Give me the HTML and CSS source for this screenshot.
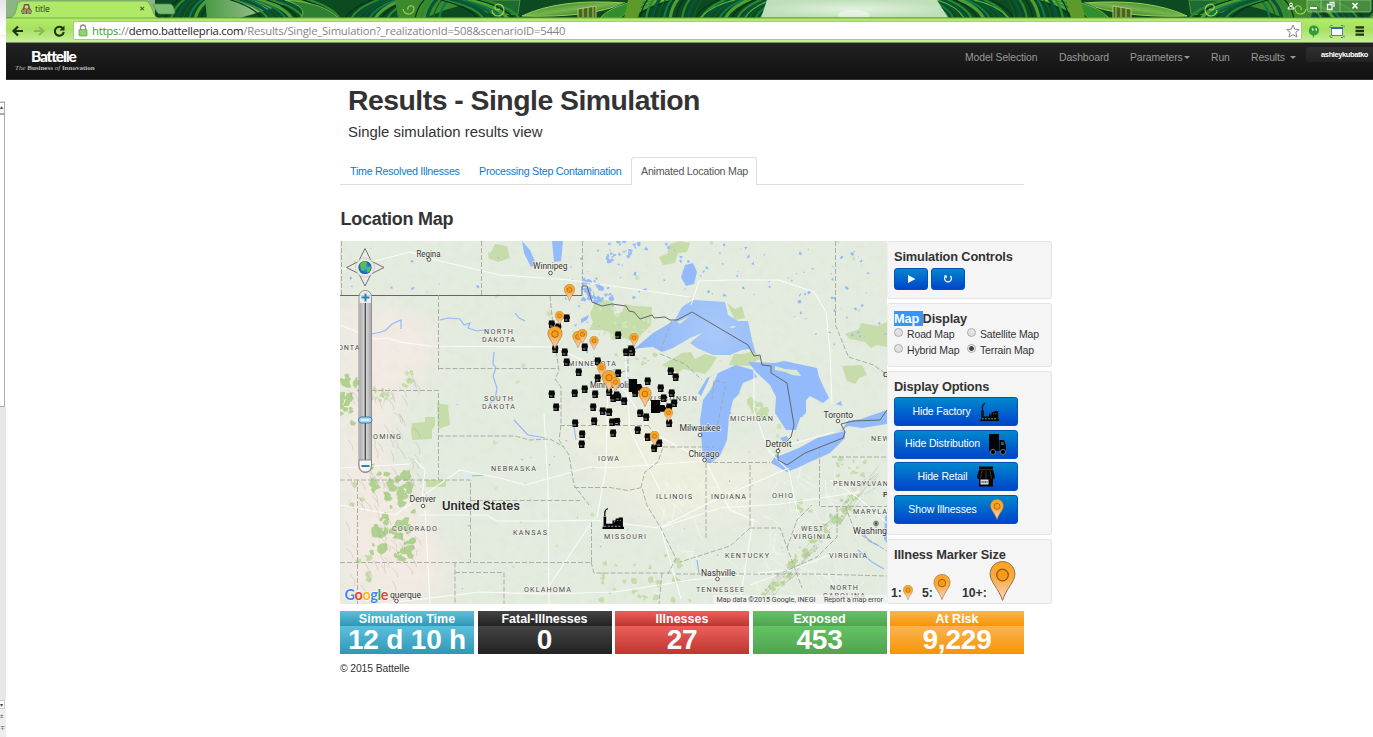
FILE: index.html
```
<!DOCTYPE html>
<html lang="en">
<head>
<meta charset="utf-8">
<title>title</title>
<link rel="stylesheet" href="styles.css">
</head>
<body>
<svg class="defs" width="0" height="0" aria-hidden="true">
  <defs>
    <linearGradient id="pinFill" x1="0" y1="0" x2="0" y2="1"><stop offset="0" stop-color="#fba31c"/><stop offset=".45" stop-color="#f9ac45"/><stop offset="1" stop-color="#f6d9d0"/></linearGradient>
    <symbol id="pin" viewBox="0 0 26 40"><path d="M13 .6C6 .6.6 6 .6 13c0 8 8.400 14 12.400 26.400C17 27 25.400 21 25.400 13 25.400 6 20 .6 13 .6z" fill="url(#pinFill)" stroke="#96703f" stroke-width="1"/><circle cx="13" cy="14" r="5.800" fill="#f79b16" stroke="#8c5a16" stroke-width="1.300"/></symbol>
    <symbol id="shop" viewBox="0 0 18 20"><path d="M2 0h14v3H2zM2 3.500h14l2 7-1 2H1l-1-2zM2 12h14v8H2z" fill="#050505"/><path d="M5 4l-1.500 8M9 4v8M13 4l1.500 8" stroke="#555" stroke-width=".6"/><path d="M3.500 13h8v5h-8z" fill="#ddd"/><path d="M4.500 15.500h6" stroke="#444" stroke-width="1.600" stroke-dasharray="1.200 .5"/></symbol>
    <symbol id="shopSmall" viewBox="0 0 18 20"><path d="M2 0h14v3l2 7-1 2h-1v8H2v-8H1l-1-2 2-7z" fill="#0a0a0a"/><path d="M4 14h7v2.500H4z" fill="#999"/></symbol>
    <symbol id="truck" viewBox="0 0 18 21"><path d="M0 0h10v17H0zM10.500 6H15l2 5.500V17h-6.500z" fill="#050505"/><path d="M12 8h2.500l1 3H12z" fill="#456"/><circle cx="4" cy="18" r="2.600" fill="#050505" stroke="#789" stroke-width=".8"/><circle cx="14" cy="18" r="2.600" fill="#050505" stroke="#789" stroke-width=".8"/></symbol>
    <symbol id="factory" viewBox="0 0 22 20"><path d="M1.500 18V8h2.500v7h6v-3h3v-2h3v-1h4v9h1v2H.5v-2z" fill="#050505"/><path d="M2.700 7.500V4.500Q2.700 2 5.500.5" fill="none" stroke="#050505" stroke-width="1.200"/><path d="M2 17.500h17" stroke="#9aa" stroke-width="1" stroke-dasharray="2 1.400"/><path d="M11.500 13h1M14.500 12h1M17 12h1" stroke="#889" stroke-width="1"/></symbol>
  </defs>
</svg>
<div class="screen">
  <aside class="behind">
    <div class="behind-top"></div>
    <div class="up">▴</div><div class="thumb"></div><div class="track"></div>
    <div class="down">▾</div><div class="jump"><span>±</span><span>∓</span></div>
  </aside>
  <div class="window">
    <header class="tabstrip">
      <svg class="wallpaper" id="wallpaper" viewBox="6 0 1367 18" width="1367" height="18"></svg>
      <svg class="tabshape" viewBox="0 0 180 18" width="180" height="18"><path d="M0 18C7 17 6 4 9 2Q10 1 13 1H135Q138 1 139 3C144 11 143 16 148 18z" fill="#afe968" stroke="#6a9d40" stroke-width=".7"/><path d="M143 5Q143 4 145 4h15q2 0 3 2l2 6q0 2-2 2h-13q-2 0-3-2z" fill="#7bbb6f" stroke="#508a4c" stroke-width=".7"/></svg>
      <div class="tabtext">
        <svg width="11" height="12" viewBox="0 0 11 12"><path d="M3 1h5l1 4 2 3-1 3H1L0 8l2-3z" fill="#6f6442"/><circle cx="5.500" cy="4" r="1.800" fill="#e6c69a"/><path d="M4 6v5M7 6v5M2 7v3M9 7v3" stroke="#e5ddb0" stroke-width=".7"/></svg>
        <span class="tabtitle">title</span><span class="tabclose">✕</span>
      </div>
      <svg class="winbtns" viewBox="1283 0 90 13" width="90" height="13"><path d="M1307 0v9q0 3 3 3h59q2 0 2-2V0z" fill="#5ba34a" fill-opacity=".75" stroke="#b5d8a0" stroke-width=".6"/><path d="M1321 0v12M1340 0v12" stroke="#a7cc92" stroke-width=".7"/><path d="M1310 8h7" stroke="#fff" stroke-width="2"/><path d="M1329.500 2.500h4.500v4.500M1327.500 4.500h4.500v5h-4.500z" fill="none" stroke="#fff" stroke-width="1.300"/><path d="M1352.500 3l5 5.500m0-5.500l-5 5.500" stroke="#fff" stroke-width="1.600"/><circle cx="1291" cy="4.500" r="1.500" fill="none" stroke="#fff"/><path d="M1288 9q0-2.500 3-2.500t3 2.500z" fill="none" stroke="#fff"/></svg>
    </header>
    <div class="toolbar">
      <svg class="navicons" viewBox="0 0 66 24" width="66" height="24"><path d="M17 12H8M12 7.500L7.500 12l4.500 4.500" fill="none" stroke="#20330f" stroke-width="2.200"/><path d="M28 12h9M33 8l4.500 4-4.500 4" fill="none" stroke="#8cba58" stroke-width="2"/><path d="M57 9.500A4.500 4.500 0 1 0 57.800 13" fill="none" stroke="#20330f" stroke-width="2"/><path d="M58.500 6.500v5h-5z" fill="#20330f"/></svg>
      <div class="omnibox">
        <svg width="10" height="13" viewBox="0 0 10 13"><path d="M2.500 6V3.500a2.500 2.500 0 0 1 5 0V6" fill="none" stroke="#8e8e8e" stroke-width="1.300"/><rect x="1" y="5.500" width="8" height="6.500" rx=".8" fill="#8fd36b" stroke="#5a9a3e" stroke-width=".7"/></svg>
        <div class="url"><span class="secure">https</span>://<b>demo.battellepria.com</b>/Results/Single_Simulation?_realizationId=508&amp;scenarioID=5440</div>
        <svg class="star" width="14" height="14" viewBox="0 0 14 14"><path d="M7 1l1.800 4.200 4.400.3-3.400 2.900L11 13 7 10.600 3 13l1.200-4.600L.8 5.500l4.400-.3z" fill="#fff" stroke="#777" stroke-width=".9"/></svg>
      </div>
      <svg class="ext" width="62" height="24" viewBox="0 0 62 24"><path d="M12 6.500a5 5 0 0 1 0 10l-.5 2.500Q10.500 17.500 10.500 16.300A5 5 0 0 1 12 6.500z" fill="#2f9b3c"/><path d="M9.500 9.500h2v2.200h-1M13 9.500h2v2.200h-1" fill="#e8fbe0"/><rect x="29.500" y="8.500" width="11" height="8" fill="#f5f8ff" stroke="#5a82ad"/><path d="M29 9h12" stroke="#3569a8" stroke-width="2"/><path d="M28 9V6.500h3M39 6.500h3V9M28 16v2.500h3M39 18.500h3V16" stroke="#5776b5" fill="none" stroke-dasharray="2 1"/><path d="M53.500 8.300h9M53.500 12h9M53.500 15.700h9" stroke="#20330f" stroke-width="2.300"/></svg>
    </div>
    <nav class="navbar">
      <div class="brand"><div class="brand-name">Battelle</div><div class="brand-tag"><i>The</i> <b>Business</b> <i>of</i> <b>Innovation</b></div></div>
      <div class="links"><a class="l1">Model Selection</a><a class="l2">Dashboard</a><a class="l3">Parameters<i class="caret"></i></a><a class="l4">Run</a><a class="l5">Results <i class="caret wide"></i></a></div>
      <div class="user">ashleykubatko</div>
    </nav>
    <main class="container">
      <h1><span>Results - Single Simulation</span></h1>
      <p class="lead">Single simulation results view</p>
      <ul class="tabs"><li class="t1">Time Resolved Illnesses</li><li class="t2">Processing Step Contamination</li><li class="active">Animated Location Map</li></ul>
      <h2>Location Map</h2>
      <div class="row">
        <svg class="map" id="map" viewBox="340 241 547 363" width="547" height="363"></svg>
        <div class="side">
          <section class="panel p1"><h3>Simulation Controls</h3><div class="pair"><button><svg width="9" height="8" viewBox="0 0 9 8"><path d="M1 0l7.500 4L1 8z" fill="#fff"/></svg></button><button><svg width="10" height="10" viewBox="0 0 10 10"><path d="M2.600 2A3.400 3.400 0 1 0 7.400 2" fill="none" stroke="#fff" stroke-width="1.200"/><path d="M.8 1.400h3v3z" fill="#fff"/></svg></button></div></section>
          <section class="panel p2"><h3><mark>Map </mark>Display</h3><div class="radios"><label><i class="radio"></i>Road Map</label><label><i class="radio"></i>Satellite Map</label><label><i class="radio"></i>Hybrid Map</label><label><i class="radio on"></i>Terrain Map</label></div></section>
          <section class="panel p3"><h3>Display Options</h3>
            <button class="opt">Hide Factory<svg class="f" width="20" height="20"><use href="#factory"/></svg></button>
            <button class="opt">Hide Distribution<svg width="18" height="21"><use href="#truck"/></svg></button>
            <button class="opt">Hide Retail<svg width="18" height="21"><use href="#shop"/></svg></button>
            <button class="opt ill">Show Illnesses<svg width="14" height="21"><use href="#pin"/></svg></button>
          </section>
          <section class="panel p4"><h3>Illness Marker Size</h3><div class="sizes"><span>1:</span><svg class="s1" width="10" height="15"><use href="#pin"/></svg><span>5:</span><svg class="s2" width="18" height="26"><use href="#pin"/></svg><span>10+:</span><svg class="s3" width="27" height="40"><use href="#pin"/></svg></div></section>
        </div>
      </div>
      <div class="stats">
        <div class="stat blue"><h4>Simulation Time</h4><strong>12 d 10 h</strong></div>
        <div class="stat black"><h4>Fatal-Illnesses</h4><strong>0</strong></div>
        <div class="stat red"><h4>Illnesses</h4><strong>27</strong></div>
        <div class="stat green"><h4>Exposed</h4><strong>453</strong></div>
        <div class="stat orange"><h4>At Risk</h4><strong>9,229</strong></div>
      </div>
      <footer>© 2015 Battelle</footer>
    </main>
  </div>
</div>
<script src="map.js"></script>
</body>
</html>
```
FILE: styles.css
```
*{box-sizing:border-box}
body{margin:0;background:#fff;font-family:"Liberation Sans",Arial,sans-serif;font-size:10.7px;color:#333;overflow:hidden}
h1,h2,h3,h4,p,ul{margin:0;padding:0}
.defs{display:block;height:0}
.screen{display:flex;width:1373px;height:737px;overflow:hidden}
.behind{width:6px;flex:none;display:flex;flex-direction:column;font-size:6px;line-height:9px;color:#444;overflow:hidden}
.behind-top{height:102px;border-bottom:1px solid #ddd;background:linear-gradient(#e5e5e5,#fff 30px,#fff 34px,#f2f2f2 35px,#fff 40px)}
.up{height:12px;border:1px solid #aaa;border-left:0;width:5px}
.thumb{height:293px;width:5px;border:1px solid #aaa;border-left:0;background:#fff}
.track{height:293px;background:#e7e7e7}
.down{height:9px;border:1px solid #ccc;border-left:0;width:5px;background:#fff}
.jump{flex:1;background:#eee;display:flex;flex-direction:column;gap:3px;padding-top:3px}
.window{flex:1;min-width:0}
.tabstrip{display:grid;height:18px;overflow:hidden}
.tabstrip>*{grid-area:1/1}
.wallpaper,.tabshape{display:block}
.tabshape{margin-left:4px}
.tabtext{display:flex;align-items:center;height:18px;width:134px;margin-left:15px;font:8.600px "Open Sans","Noto Sans",sans-serif;color:#243315}
.tabtitle{margin-left:3px;flex:1;letter-spacing:-.1px}
.tabclose{font:7px "DejaVu Sans",sans-serif;margin-right:10px}
.winbtns{justify-self:end}
.toolbar{height:25px;display:flex;align-items:center;background:linear-gradient(#b0ec66,#a7e162 45%,#c8ef9c);border-top:1px solid #94cc5c;border-bottom:1px solid #799162}
.omnibox{width:1229px;margin-left:1px;height:19px;background:#fff;border:1px solid #a8ca82;border-radius:2px;display:flex;align-items:center;padding:0 1px 0 4px}
.url{font:11.300px/17px "Open Sans","Noto Sans",sans-serif;letter-spacing:-.23px;color:#858585;margin-left:4px;white-space:nowrap}
.url b{font-weight:400;color:#222}
.secure{color:#31a038}
.star{margin-left:auto}
.navbar{height:37px;background:linear-gradient(#222,#111);border-bottom:1px solid #333;display:flex;overflow:hidden}
.brand{width:120px;padding:5px 0 0 9px;color:#fff}
.brand-name{font:900 15.500px/17px Lato,sans-serif;letter-spacing:-1.200px;margin-left:16px}
.brand-tag{font:7px/7px "Liberation Serif",serif;color:#bbb;white-space:nowrap}
.links{display:grid;grid-template-columns:94px 71px 81px 40px 55px;margin-left:839px;line-height:30px;font-size:10.400px;letter-spacing:-.1px;color:#999;white-space:nowrap}
.caret{display:inline-block;border:3px solid transparent;border-top-color:#999;border-bottom:0;vertical-align:2px;margin-left:1px}
.wide{margin-left:2px}
.user{flex:1;margin-top:4px;height:15px;background:linear-gradient(#303030,#222);border-radius:3px 0 0 3px;color:#fff;font:bold 7.500px/16px "Liberation Sans",Arial,sans-serif;text-align:right;padding-right:5px;letter-spacing:-.4px}
.container{width:684px;margin-left:334px}
h1{font-size:28.400px;line-height:32px;padding:4px 0 0 8px;height:43px;white-space:nowrap;letter-spacing:-.52px}
.lead{font-size:14.900px;line-height:19px;padding-left:8px;height:34px}
.tabs{list-style:none;display:flex;height:28px;border-bottom:1px solid #ddd;line-height:28px;color:#0d79cb;white-space:nowrap;letter-spacing:-.25px}
.t1{width:130px;padding-left:10px}.t2{width:161px;padding-left:9px}
.active{height:28px;padding:0 9px;border:1px solid #ddd;border-bottom:0;border-radius:3px 3px 0 0;background:#fff;color:#555;line-height:27px;width:126px}
h2{font-size:18px;line-height:25px;padding-top:22px;height:56px;letter-spacing:-.28px;padding-left:.5px}
.row{display:flex;width:712px;height:363px}
.map{flex:none;display:block}
.side{width:165px;display:flex;flex-direction:column}
.panel{background:#f5f5f5;border:1px solid #e3e3e3;border-left-color:#eee;border-radius:3px;padding:6px 6px 0;white-space:nowrap}
.p1{height:58px;margin-bottom:4px}.p2{height:64px;margin-bottom:4px}.p3{height:164px;margin-bottom:4px}.p4{height:65px}
h3{font-size:12.800px;line-height:17px;height:16px;letter-spacing:-.15px}
.pair{display:flex;gap:3px;margin-top:4px}
button{border:1px solid #0451b8;border-radius:3px;background:linear-gradient(#08c,#04c);color:#fff;font:10.500px "Liberation Sans",Arial,sans-serif;letter-spacing:-.12px;padding:0}
.pair button{width:34px;height:22px;display:flex;align-items:center;justify-content:center}
mark{background:#3297fd;color:#fff;white-space:pre}
.radios{display:grid;grid-template-columns:73px auto;line-height:16px;font-size:10.500px;letter-spacing:-.13px}
.radios label{display:flex;align-items:center}
.radio{width:9px;height:9px;border-radius:50%;border:1px solid #aaa;background:linear-gradient(#e8e8e8,#ddd);margin-right:4px;margin-top:-3px}
.on{background:radial-gradient(#444 0 2px,#eee 2.800px)}
.opt{width:124px;height:29px;display:flex;align-items:center;justify-content:center;gap:9px;margin-bottom:3.700px;padding-bottom:2px}
.opt svg{position:relative;top:1px}
.p3 h3{margin-bottom:3px}
.ill{gap:13px}
.sizes{display:flex;align-items:flex-end;height:40px;margin:-1px 0 0 -3px;font-size:12.300px;font-weight:700;line-height:15px}
.sizes svg{flex:none}
.s1{margin:0 9px 1px 1px}.s2{margin:0 11px 1px 0}.s3{margin-left:2px}
.stats{display:flex;gap:3.500px;margin-top:7px}
.stat{width:134px;height:43px;color:#fff;text-align:center;white-space:nowrap}
.stat h4{height:15px;font-size:12.500px;line-height:16px;background:linear-gradient(var(--a),var(--b))}
.stat strong{display:block;height:28px;font-size:28px;line-height:28px;letter-spacing:-.2px;background:linear-gradient(var(--a),var(--b))}
.blue{--a:#5bc0de;--b:#2f96b4}.black{--a:#444;--b:#222}.red{--a:#ee5f5b;--b:#bd362f}.green{--a:#62c462;--b:#51a351}.orange{--a:#fbb450;--b:#f89406}
footer{margin-top:8px;line-height:13px;font-size:10.400px;letter-spacing:-.12px}
```
FILE: map.js
```
(function () {
  let seed = 7;
  const rnd = () => (seed = (seed * 16807) % 2147483647) / 2147483647;
  const P = (d, a) => `<path d="${d}" ${a}/>`;

  /* deterministic blotches: area, count, colour, size range */
  function specks(x, y, w, h, n, fill, s0, s1, extra) {
    let d = '';
    for (let i = 0; i < n; i++) {
      const cx = x + rnd() * w, cy = y + rnd() * h, r = s0 + rnd() * (s1 - s0), k = 7;
      for (let j = 0; j < k; j++) {
        const a = j / k * 6.283, q = r * (.35 + rnd() * .9);
        d += (j ? 'L' : 'M') + (cx + Math.cos(a) * q).toFixed(1) + ' ' + (cy + Math.sin(a) * q).toFixed(1);
      }
      d += 'z';
    }
    return P(d, `fill="${fill}" ${extra || ''}`);
  }

  let m = `<defs>
    <filter id="soft" x="-30%" y="-30%" width="160%" height="160%"><feGaussianBlur stdDeviation="12"/></filter>
    <filter id="relief" x="0" y="0" width="1" height="1"><feTurbulence type="fractalNoise" baseFrequency=".11" numOctaves="4" seed="3"/><feColorMatrix values="0 0 0 0 .45  0 0 0 0 .48  0 0 0 0 .4  0 .9 0 0 -.38"/></filter>
    <radialGradient id="globe"><stop offset="0" stop-color="#4fb4f4"/><stop offset="1" stop-color="#1257a8"/></radialGradient>
    <linearGradient id="rail"><stop offset="0" stop-color="#aaa"/><stop offset=".5" stop-color="#ddd"/><stop offset="1" stop-color="#aaa"/></linearGradient>
    <radialGradient id="lake" gradientUnits="userSpaceOnUse" cx="715" cy="330" r="75"><stop offset="0" stop-color="#a9c9fb"/><stop offset="1" stop-color="#8fb7f8"/></radialGradient>
  </defs>
  <rect x="340" y="241" width="547" height="363" fill="#e4ebdf"/>`;
  m += P('M340 300L400 310 440 330 430 370 390 400 400 430 380 450 430 520 450 570 430 604H340z', 'fill="#f3ebe3" filter="url(#soft)"');
  m += P('M560 420L640 405 700 450 780 460 750 520 650 520 600 480z', 'fill="#edefdf" filter="url(#soft)"');
  m += '<rect x="340" y="241" width="547" height="363" filter="url(#relief)" opacity=".15"/>';
  const g = '#c6dcaa';
  m += specks(372, 466, 42, 94, 66, '#b1d191', 2, 6);
  m += specks(340, 376, 17, 50, 18, '#b1d191', 2, 6);
  m += specks(368, 385, 22, 25, 9, g, 2, 5) + specks(398, 368, 15, 18, 5, g, 2, 4);
  m += specks(350, 480, 20, 110, 10, g, 2, 4);
  m += P('M595 302L604 300 613 302 614 315 622 312 625 304 634 306 652 307 651 325 643 333 634 342 624 338 612 340 609 332 602 330 589 330 593 322 590 314zM495 244l12 2 3 12-12 4-10-4zM412 423l13-1 0-5 10 0 0 9 -3 3 0 10-20 1-1-10zM437 403l11 2 2 20-12 4zM426 480h20v7h-20zM662 365l20-12 9-1 4 7 10-5 12 3-6 10-6 7-22-5-5 4zM729 365l5-11 10 0 8-3 10 7-6 3-2 5zM845 334l14-5 2-6 17 3 9-4v25l-10-2-6 3-6-6-15-3zM842 366l20-1 5 10-8 3-4 6-8-3-2-6zM670 244l10-3 10 2-3 9-9 1-3 10-12 2-4-8 8-3zM727 303l8 6 7-3 3 12-10 2z', `fill="${g}"`);
  m += specks(600, 555, 90, 46, 26, g, 1.500, 4.500) + specks(610, 345, 55, 22, 9, g, 1.500, 4.500) + specks(595, 300, 60, 42, 22, '#d5e4c0', 1, 3);
  m += specks(750, 400, 18, 22, 8, g, 2, 5) + specks(790, 500, 25, 12, 5, g, 2, 4);
  for (let i = 0; i < 36; i++) m += specks(763 + i * 2.400, 590 - i * 2.800, 13, 9, 2, '#bbd89d', 1, 4);
  m += specks(835, 457, 45, 25, 11, g, 1.500, 4) + specks(340, 241, 540, 340, 40, g, 1, 3, 'opacity=".7"');

  /* relief ridges */
  let ridge = '';
  for (let i = 0; i < 95; i++) { const x = 345 + rnd() * 75, y = 372 + rnd() * 220; ridge += `M${x} ${y}l${3 + rnd() * 3} ${4 + rnd() * 4}l${rnd() * 3 - 1} 5`; }
  for (let i = 0; i < 70; i++) { const t = rnd(), x = 755 + t * 118, y = 600 - t * 133 + rnd() * 20; ridge += `M${x} ${y}l${6 + rnd() * 6} ${-7 - rnd() * 5}`; }
  m += P(ridge, 'fill="none" stroke="#9ba493" stroke-width=".8" opacity=".38"');

  /* water */
  const w = '#93bafa';
  m += specks(560, 244, 210, 55, 60, w, .4, 2.200) + specks(605, 241, 34, 24, 20, w, .6, 2.800);
  m += specks(790, 245, 97, 100, 46, w, .4, 2.200) + specks(582, 278, 30, 24, 34, w, 1, 3.500);
  m += specks(570, 300, 60, 95, 28, w, .4, 1.500) + specks(345, 245, 190, 50, 14, w, .5, 2) + specks(450, 400, 430, 190, 55, w, .3, 1.200);
  m += P('M522 241L530 250 536 264 531 267 524 253zM552 241h11l-2 20-7 1zM685 265l8-2 4 9-3 12-8 2-5-9zM581 319l8-4-2 5-6 3z', `fill="${w}"`);
  m += P('M633 350L653 333 675 320 682 307 693 300 710 301 725 302 728 315 738 321 748 321 752 340 756 355 750 349 742 350 730 355 713 355 697 348 690 343 702 333 690 338 673 348 662 352 653 347 640 348z', 'fill="url(#lake)"');
  m += P('M736 365L753 370 757 377 743 383 738 395 733 400 729 417 727 440 720 456 711 463 703 461 702 447 701 433 700 420 703 400 711 389 718 373 710 377 701 396 698 393 707 378 727 369z', `fill="${w}"`);
  m += P('M748 362L775 363 784 361 817 368 819 377 824 388 829 398 823 403 810 396 806 400 806 413 800 418 796 430H786L775 413 776 397 770 385 756 372z', `fill="${w}"`);
  m += P('M771 463L776 454 779 456 799 448 817 438 845 431 845 438 830 453 812 461 797 468 787 472zM840 432L848 421 861 419 887 410V424L862 428 848 426zM780 438l7-2 2 5-6 1zM836 404l5-3 1 5zM885 517l2-3v29l-3-4z', `fill="${w}"`);
  m += P('M775 366l10 3 12 1 4 6-9-1-7-3-10-2zM677 322l13-6-10 8zM731 326h5l-2 2h-4z', 'fill="#dce8cd"');
  m += P('M440 320l8-2 12 1 4 6 6-2-2 5 9 3 13-2M494 352l-1 12 3 4-3 8 4 12-2 12-6 4M372 334l9-2 5-2 6-6 9-4 0 9M514 420l14 15 18 3M484 475l-12 1M515 313l4 5 6 3M858 550l14 12 12 7M861 530l8 11 10 5M697 560l2 14M573 420l3 20', `fill="none" stroke="${w}" stroke-width="1.200"`);

  /* roads */
  m += P('M340 325L375 339 388 338 400 342 430 346 555 347 620 378M340 270L410 252 440 261 500 275 570 280 690 297M380 604L480 592 545 594 615 592 690 580 790 570M340 505L395 515 460 470 500 478 525 485 590 467 605 468 705 461M420 515h67l10 6 60 0 35-1M549 604l-1-120-4-70M593 520l66 8 60-30 70-30M597 518l9-50 2-90M660 528l60-20 60-4 80-12M705 460l25 50 24 10M616 378l37 55 52 28M753 520l-13 80M661 529l20 70M691 305l8-24 32-1 48 0 35 12 12 20 4 40 2 52M754 371l0 40 15 40 20 20 10 50M781 447l53-15M593 520l-50 75M421 510l4-40-10-10M425 510l5 94M830 480l25 15 32 28M625 350l5 80 30 60M830 555l-80 30M340 468l70-4', 'fill="none" stroke="#fff" stroke-width="1.100" opacity=".8" stroke-linejoin="round"');
  m += P(Array.from({length: 70}, () => { const x = 650 + rnd() * 225, y = 465 + rnd() * 130; return `M${x} ${y}l${rnd() * 24 - 12} ${rnd() * 22}l${rnd() * 18} ${rnd() * 12}`; }).join(''), 'fill="none" stroke="#fff" stroke-width=".7" opacity=".55"');

  /* borders */
  m += P('M340 295.500H582V286H587L592 302 602 306 612 304 626 306 629 311 634 312 640 319 652 315 654 318 665 317 670 320 677 320 692 312 748 345 754 356 760 355 762 365 771 366 771 373 787 383 794 425 791 437 778 449 778 460 787 465 805 453 843 438 845 432 841 424 853 421 880 420 887 410', 'fill="none" stroke="#666" stroke-width="1" stroke-linejoin="round"');
  m += P('M438.500 295V370M341.500 241V295M481.500 241V295M582.500 241V286M357 390.500H438.500V480M438.500 368.500H558.500M438.500 436H515l15 4 20-1 14 8M340 480H470.500V562M340 562.500H591.500V520M470.500 500.500H580M455 562.500V604M455 572.500H504V604M357.500 480V604M550 296l4 40 5 35-4 8 6 8V425l-2 15 10 15 5 30 15 20M560 425.500H648M574 487.500H610l18 3 14 -3 5 18 13 21 16 32-8 15M591 562l3 11H672M676 574H815l72 2M660 354l25 10 17 16M663 447H714M706 463v75M706 462.500H770M750 465V528l-20 18-50 16M750 528l30 0 22 60M835.500 241V325l13 32 25 8 14 10M819.500 452V506.500H887M832 457H887M672 320l-12 32M628 345l0 25-18 6M648 425l15 22-5 15-13 10-4 15M787 548l10-28 15-15M837 507l0 30-20 20-40 18M662 573l-3 31M845 506l10 25 32 20M712 400l2-20 12 3-10 50', 'fill="none" stroke="#a5a8a0" stroke-width=".9" stroke-dasharray="5 2"');

  /* labels: text, left x, baseline, width */
  const states = [['NORTH',484,333.500,29],['DAKOTA',482,341.800,33],['SOUTH',484,401.300,29],['DAKOTA',482,409,33],['MINNESOTA',568,365.800,48],['WISCONSIN',646,401,51],['MICHIGAN',730,420.500,43],['IOWA',598,460.500,21],['NEBRASKA',491,471,45],['WYOMING',360,438.500,41],['COLORADO',392,531,45],['KANSAS',513,535,34],['ILLINOIS',656,499,36],['INDIANA',711,499,35],['OHIO',772,497.500,21],['WEST',801,531,22],['VIRGINIA',793,538.500,38],['KENTUCKY',725,557.500,44],['VIRGINIA',829,557.500,38],['TENNESSEE',696,591.500,48],['OKLAHOMA',524,591.500,47],['MISSOURI',604,539,42],['NORTH',830,590,28],['CAROLINA',823,598,42],['NEW',871,440.500,18],['PENNSYLVAN',833,485.500,55],['MARYLA',853,514,34],['ONTANA',338,349.500,33]];
  const cities = [['Regina',416.500,256.500,24],['Winnipeg',533,269,34.500],['Milwaukee',679.500,430.500,41],['Chicago',688.500,456.500,31],['Detroit',765.500,446.500,26],['Toronto',823.500,417.500,29.500],['Denver',409.500,502,26.500],['Nashville',701,575.500,34.500],['Washing',853,534,34],['Minneapolis',590,387.500,42],['querque',390,598,31]];
  const label = (a, size, fill, adjust, weight) => `<text x="${a[1]}" y="${a[2]}" textLength="${a[3]}" font-size="${size}" font-weight="${weight}" fill="${fill}" font-family="Roboto,sans-serif" stroke="#f4f5ee" stroke-width="1.500" stroke-opacity=".75" paint-order="stroke" lengthAdjust="${adjust}">${a[0]}</text>`;
  states.forEach(a => m += label(a, 7.200, '#4c4c4c', 'spacing', 400));
  cities.forEach(a => m += label(a, 8.700, '#333', 'spacingAndGlyphs', 400));
  m += label(['United States',442,509.700,78], 12.900, '#222', 'spacingAndGlyphs', 500);
  m += '<text x="883" y="497" font-size="8" font-family="Roboto,sans-serif">P</text><text x="883" y="377" font-size="8" font-family="Roboto,sans-serif">O</text>';
  [[429,259.500],[550.500,273],[700,435],[704.500,460],[778,451],[838,421],[423,506],[717.500,579],[396.500,601]].forEach(c => m += `<circle cx="${c[0]}" cy="${c[1]}" r="1.800" fill="#fff" stroke="#444" stroke-width=".9"/>`);
  m += '<circle cx="876" cy="523.500" r="2.300" fill="#fff" stroke="#333" stroke-width=".8"/><circle cx="876" cy="523.500" r="1.300" fill="#333"/>';

  /* markers */
  const shops = [551.5,324,566.5,318,558,327,555,349,564.5,352,566.5,362,584.5,347,597.5,361,578.5,372,597.5,378,551.5,394,556,407,574.5,393,584.5,389,595,394,593,407,602.5,411,609,412,575,423,594,421,612,422,618,335,626,352,632,352,631,349,618,373,647.5,381,670.5,371,675.5,377,660.5,388,635,393,616.5,395,609,392,613,398,618,397,624,401,663.5,398,671.5,393,674,403,669,407,640,413,646,417,669,423,617,421.5,582,434,581.5,444,613,433,637.5,430,647.5,437,659,443,654,448];
  for (let i = 0; i < shops.length; i += 2) m += `<use href="#shopSmall" x="${shops[i] - 3.3}" y="${shops[i + 1] - 3.8}" width="7" height="7.700"/>`;
  m += '<svg x="628.500" y="379" width="14" height="13" viewBox="0 0 18 21" preserveAspectRatio="none"><path d="M0 0h11v21H0zM11 8h5l2 5v6h-7z" fill="#050505"/></svg><svg x="651" y="400" width="15" height="13" viewBox="0 0 18 21" preserveAspectRatio="none"><path d="M0 0h11v21H0zM11 8h5l2 5v6h-7z" fill="#050505"/></svg><use href="#factory" x="602" y="508" width="23" height="21"/>';
  [[569.5,301,17],[559.5,325,14],[555,349,23],[578,348,17],[582.5,344,15],[594,350,14],[601.5,377,14],[609,392,22],[615.5,392,15],[634,347,14],[645,407,20],[668.5,422,14],[654.5,446,15]].forEach(p => m += `<use href="#pin" x="${p[0] - p[2] * .35}" y="${p[1] - p[2]}" width="${p[2] * .7}" height="${p[2]}"/>`);

  /* map controls */
  m += P('M365 248.500l6 12h-12zM365 286l6-12h-12zM346.500 267.500l12-6v12zM384 267.500l-12-6v12z', 'fill="#e9e9e6" stroke="#666" stroke-width=".9"');
  m += '<circle cx="365" cy="267.500" r="9.500" fill="#e9e9e6" stroke="#bbb" stroke-width=".6"/><circle cx="365" cy="267.500" r="6.600" fill="url(#globe)"/>';
  m += P('M360 264q3-4 7-2l-1 4-3 1 1 4-3-1zM367 268l4-2-1 5-3 2z', 'fill="#58c63a"');
  m += '<rect x="359" y="290.500" width="12.500" height="182" rx="6" fill="#eee" fill-opacity=".8" stroke="#888" stroke-width=".9"/><rect x="359.500" y="303" width="11.500" height="157" fill="url(#rail)"/><path d="M365.300 303V460" stroke="#444" stroke-width="1.300"/><path d="M359 460h12.500v5q0 7-6.200 7t-6.300-7z" fill="#f4f4f4" stroke="#777" stroke-width=".8"/><path d="M361.500 297.500h8M365.500 293.500v8M361.500 466h8" stroke="#2d82b5" stroke-width="2"/><rect x="358.500" y="417" width="13.500" height="6" rx="3" fill="#a8d8f5" stroke="#367ca8" stroke-width="1"/><path d="M361 420h8" stroke="#e8f8ff" stroke-width="1.300"/>';
  m += '<rect x="714" y="595" width="173" height="9" fill="#f5f5f5" opacity=".7"/>';
  m += '<g font-family="Roboto,sans-serif" font-size="7.200" fill="#444"><text x="716.500" y="601.500" textLength="99">Map data ©2015 Google, INEGI</text><text x="824" y="601.500" textLength="59">Report a map error</text></g>';
  m += '<text x="344.500" y="599.500" font-family="Lato,sans-serif" font-size="14.500" font-weight="700" textLength="44" stroke="#fff" stroke-width="1" paint-order="stroke"><tspan fill="#4285f4">G</tspan><tspan fill="#ea4335">o</tspan><tspan fill="#fbbc05">o</tspan><tspan fill="#4285f4">g</tspan><tspan fill="#34a853">l</tspan><tspan fill="#ea4335">e</tspan></text>';
  document.getElementById('map').innerHTML = m;

  /* leafy browser theme strip */
  let s = '<defs><linearGradient id="leaf" x1="0" y1="0" x2="1" y2="1"><stop offset="0" stop-color="#1b6b25"/><stop offset=".5" stop-color="#74b549"/><stop offset="1" stop-color="#0d471f"/></linearGradient><linearGradient id="shade"><stop offset="0" stop-color="#4a9a45"/><stop offset=".5" stop-color="#8cba80"/><stop offset="1" stop-color="#1c6a2b"/></linearGradient><radialGradient id="moon"><stop offset="0" stop-color="#e2f2dd"/><stop offset="1" stop-color="#bfdfba"/></radialGradient></defs><rect x="6" width="1367" height="18" fill="#0c4a22"/>';
  const blades = (x0, x1, bend) => {
    const c = ['#04351a', '#2c8a2e', '#07563c', '#145f23', '#0a7a50', '#4f9e31'];
    let o = '';
    for (let x = x0, i = 0; x < x1; x += 6, i++) o += `<path d="M${x} 19Q${x + bend * .2} 7 ${x + bend} -1" fill="none" stroke="${c[i % 6]}" stroke-width="${1.2 + i % 3}"/>`;
    return o;
  };
  const half =
    blades(165, 240, 14) +
    P('M205 0H300L240 18H207z', 'fill="url(#shade)"') + blades(262, 345, -34) +
    P('M285 0Q325 3 338 18L300 18Q310 8 285 0z', 'fill="#2f7f33" stroke="#86c544" stroke-width=".8"') +
    blades(345, 400, 30) + P('M395 0H480L445 10 425 18H398z', 'fill="#3d8a2e"') + blades(415, 445, 10) +
    P('M455 0H520L518 14Q490 18 455 0z', 'fill="#1e6a35" stroke="#4f9e31"') + blades(478, 525, -40) +
    P('M522 16Q560 -2 625 3Q590 18 522 16z', 'fill="url(#leaf)" stroke="#9bd052"') +
    P('M578 18V9l18-3v12zM583 8v10M588 7v11M593 7v11', 'fill="#3e6a22" stroke="#c4c06a" stroke-width="1"') +
    blades(600, 640, 40) + P('M620 18Q632 4 665 0H640Q610 6 600 18z', 'fill="#2f8e2e" stroke="#86c544" stroke-width=".8"') +
    blades(640, 695, 8) + P('M628 0h15l-5 18h-14z', 'fill="#5d9a2a"') + blades(695, 775, 26) +
    P('M700 18Q712 5 735 0M745 18Q752 6 772 0', 'fill="none" stroke="#58b03c" stroke-width="1.200"') +
    P('M403 9a5.500 5.500 0 1 0 11-1q-1-3-4-2t-2 4M492 10a6 6 0 1 0 6-6q-4 1-3 4t5 1', 'fill="none" stroke="#9bd052" stroke-width="1.200"');
  s += half + `<g transform="translate(1709 0) scale(-1 1)">${half}</g>`;
  s += P('M6 0H155V18H6z', 'fill="#8bb684"');
  s += P('M767 0H937L948 18H761z', 'fill="url(#moon)"') + '<ellipse cx="854" cy="15" rx="16" ry="5" fill="#fff" opacity=".45"/><rect x="6" y="17" width="1367" height="1" fill="#6b8d56" opacity=".7"/>';
  document.getElementById('wallpaper').innerHTML = s;
})();
```
